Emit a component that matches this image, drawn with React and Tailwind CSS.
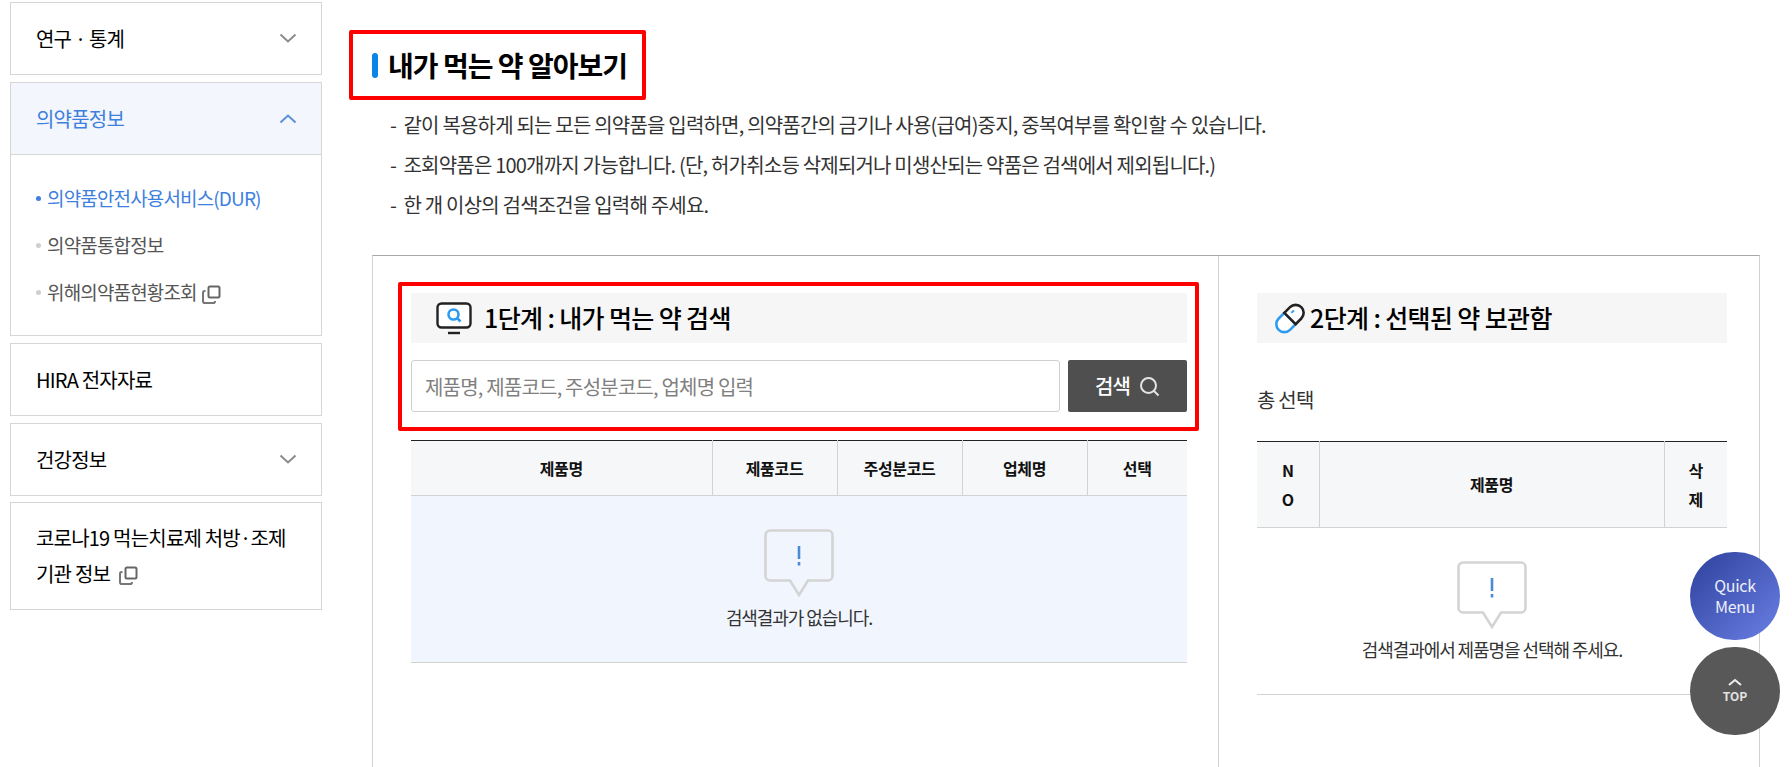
import React from 'react';

const FONT = '"Noto Sans CJK KR", "Noto Sans", sans-serif';

function Chevron({ up, className }) {
  return (
    <svg width="18" height="11" viewBox="0 0 18 11" fill="none" className={className}>
      <path d={up ? 'M1.5 9.5 9 2.5l7.5 7' : 'M1.5 1.5l7.5 7 7.5-7'} stroke="currentColor" strokeWidth="2" />
    </svg>
  );
}

function CopyIcon({ className }) {
  return (
    <svg width="19" height="19" viewBox="0 0 19 19" fill="none" className={className}>
      <rect x="6.5" y="1.5" width="11" height="11" rx="1.5" stroke="#666" strokeWidth="2" />
      <path d="M3.5 6H2.8C1.8 6 1 6.8 1 7.8v8.4c0 1 .8 1.8 1.8 1.8h8.4c1 0 1.8-.8 1.8-1.8V16" stroke="#777" strokeWidth="2" />
    </svg>
  );
}

function MenuHead({ children, chevron }) {
  return (
    <div className="flex items-center justify-between h-[73px] pl-[25px] pr-[24px] border border-[#d6d6d6] text-[20px] text-black tracking-[-0.04em]">
      <span>{children}</span>
      {chevron && <Chevron className="text-[#8a8a8a]" />}
    </div>
  );
}

function SubItem({ children, active }) {
  return (
    <li className={`flex items-center h-[47px] text-[19px] tracking-[-0.045em] ${active ? 'text-[#3d80de]' : 'text-[#555]'}`}>
      <span className={`w-[5px] h-[5px] rounded-full mr-[6px] ${active ? 'bg-[#3d80de]' : 'bg-[#cfcfcf]'}`} />
      {children}
    </li>
  );
}

function Sidebar() {
  return (
    <aside className="w-[312px] shrink-0 ml-[10px] mt-[2px] flex flex-col gap-[7px]">
      <MenuHead chevron>연구 · 통계</MenuHead>
      <div className="border border-[#d6d6d6]">
        <div className="flex items-center justify-between h-[72px] pl-[25px] pr-[24px] bg-[#f3f6fc] border-b border-[#d6d6d6] text-[20px] text-[#3d80de] tracking-[-0.04em]">
          <span>의약품정보</span>
          <Chevron up className="text-[#5a8fdc]" />
        </div>
        <ul className="pl-[25px] pt-[20px] pb-[19px]">
          <SubItem active>의약품안전사용서비스(DUR)</SubItem>
          <SubItem>의약품통합정보</SubItem>
          <SubItem>
            위해의약품현황조회
            <CopyIcon className="ml-[5px] mt-[3px]" />
          </SubItem>
        </ul>
      </div>
      <MenuHead>HIRA 전자자료</MenuHead>
      <MenuHead chevron>건강정보</MenuHead>
      <div className="-mt-[1px] border border-[#d6d6d6] pl-[25px] pr-[10px] pt-[17px] pb-[17px] text-[20px] leading-[36px] text-black tracking-[-0.04em]">
        <div>코로나19 먹는치료제 처방·조제</div>
        <div className="flex items-center">
          기관 정보
          <CopyIcon className="ml-[9px] mt-[3px]" />
        </div>
      </div>
    </aside>
  );
}

function SearchMonitor() {
  return (
    <svg width="36" height="33" viewBox="0 0 36 33" fill="none">
      <rect x="1.5" y="1.5" width="33" height="24" rx="4" fill="#fff" stroke="#222" strokeWidth="2.4" />
      <path d="M12 31h12" stroke="#222" strokeWidth="2.4" />
      <circle cx="17.5" cy="12.5" r="5" stroke="#2f9bf0" strokeWidth="2.6" />
      <path d="M21.5 16.5l3 3" stroke="#2f9bf0" strokeWidth="2.6" />
    </svg>
  );
}

function PillIcon() {
  return (
    <svg width="32" height="33" viewBox="0 0 32 33" fill="none">
      <g transform="rotate(-45 16 16.5)">
        <path d="M16 8.5H8a8 8 0 0 0 0 16h8z" fill="#fff" stroke="#2f9bf0" strokeWidth="2.6" />
        <path d="M16 8.5h8a8 8 0 0 1 0 16h-8z" fill="#fff" stroke="#222" strokeWidth="2.6" />
        <path d="M21 13.5h3.5" stroke="#2f9bf0" strokeWidth="2" />
      </g>
    </svg>
  );
}

function Bubble() {
  return (
    <svg width="70" height="68" viewBox="0 0 70 68" fill="none">
      <path d="M6 1.5h58a4.5 4.5 0 0 1 4.5 4.5v41a4.5 4.5 0 0 1-4.5 4.5H44L35 66 26 51.5H6A4.5 4.5 0 0 1 1.5 47V6A4.5 4.5 0 0 1 6 1.5z" stroke="#d4d4d4" strokeWidth="2.6" />
      <path d="M35 17v13" stroke="#4a8bd6" strokeWidth="2.6" />
      <path d="M35 33v3.5" stroke="#4a8bd6" strokeWidth="2.6" />
    </svg>
  );
}

function Th({ children, last }) {
  return (
    <th className={`font-bold text-[16px] text-[#111] leading-[29px] px-[20px] break-all tracking-[-0.02em] ${last ? '' : 'border-r border-[#d2d2d2]'}`}>
      {children}
    </th>
  );
}

function Notes() {
  return (
    <ul className="ml-[41px] mt-[5px] text-[20px] leading-[40px] text-[#333] tracking-[-0.04em]">
      <li>- &nbsp;같이 복용하게 되는 모든 의약품을 입력하면, 의약품간의 금기나 사용(급여)중지, 중복여부를 확인할 수 있습니다.</li>
      <li>- &nbsp;조회약품은 100개까지 가능합니다. (단, 허가취소등 삭제되거나 미생산되는 약품은 검색에서 제외됩니다.)</li>
      <li>- &nbsp;한 개 이상의 검색조건을 입력해 주세요.</li>
    </ul>
  );
}

function SearchStep() {
  return (
    <div className="w-[846px] shrink-0 border-r border-[#d2d2d2] pt-[26px]">
      <div className="ml-[25px] w-[801px] border-4 border-[#ff0000] rounded-[2px] pl-[9px] pr-[8px] pt-[7px] pb-[15px]">
        <div className="flex items-center h-[50px] pl-[25px] bg-[#f6f6f6] text-[25px] font-medium text-black tracking-[-0.025em]">
          <SearchMonitor />
          <span className="ml-[12px]">1단계 : 내가 먹는 약 검색</span>
        </div>
        <div className="flex gap-[8px] mt-[17px]">
          <input
            readOnly
            placeholder="제품명, 제품코드, 주성분코드, 업체명 입력"
            className="w-[649px] h-[52px] px-[13px] border border-[#d0d0d0] rounded-[3px] text-[20px] tracking-[-0.04em] placeholder:text-[#808080]"
          />
          <button className="flex-1 flex items-center justify-center gap-[9px] h-[52px] bg-[#4f4f4f] rounded-[2px] text-[20px] font-medium text-white tracking-[-0.04em]">
            검색
            <svg width="21" height="21" viewBox="0 0 21 21" fill="none">
              <circle cx="9.5" cy="9.5" r="7.5" stroke="#e4e4e4" strokeWidth="2" />
              <path d="M15 15l4.5 4.5" stroke="#e4e4e4" strokeWidth="2" />
            </svg>
          </button>
        </div>
      </div>
      <table className="ml-[38px] mt-[9px] w-[776px] table-fixed border-collapse">
        <colgroup>
          <col className="w-[301px]" />
          <col className="w-[125px]" />
          <col className="w-[125px]" />
          <col className="w-[125px]" />
          <col className="w-[100px]" />
        </colgroup>
        <thead>
          <tr className="h-[55px] bg-[#f6f7f9] border-t border-b border-t-[#222] border-b-[#d2d2d2]">
            <Th>제품명</Th>
            <Th>제품코드</Th>
            <Th>주성분코드</Th>
            <Th>업체명</Th>
            <Th last>선택</Th>
          </tr>
        </thead>
        <tbody>
          <tr className="bg-[#f1f5fd] border-b border-[#d2d2d2]">
            <td colSpan={5} className="h-[167px] text-center text-[18px] text-[#333] tracking-[-0.06em]">
              <div className="flex flex-col items-center gap-[7px] pt-[1px]">
                <Bubble />
                <span className="leading-[26px]">검색결과가 없습니다.</span>
              </div>
            </td>
          </tr>
        </tbody>
      </table>
    </div>
  );
}

function StorageStep() {
  return (
    <div className="flex-1 pt-[37px] pl-[38px] pr-[32px]">
      <div className="flex items-center h-[50px] pl-[17px] bg-[#f6f6f6] text-[25px] font-medium text-black tracking-[-0.025em]">
        <PillIcon />
        <span className="ml-[4px]">2단계 : 선택된 약 보관함</span>
      </div>
      <p className="mt-[41px] text-[20px] leading-[32px] text-[#333] tracking-[-0.04em]">총 선택</p>
      <table className="mt-[25px] w-full table-fixed border-collapse">
        <colgroup>
          <col className="w-[62px]" />
          <col />
          <col className="w-[63px]" />
        </colgroup>
        <thead>
          <tr className="h-[86px] bg-[#f6f7f9] border-t border-b border-t-[#222] border-b-[#d2d2d2]">
            <Th>NO</Th>
            <Th>제품명</Th>
            <Th last>삭제</Th>
          </tr>
        </thead>
        <tbody>
          <tr className="border-b border-[#d2d2d2]">
            <td colSpan={3} className="h-[167px] text-center text-[18px] text-[#333] tracking-[-0.06em]">
              <div className="flex flex-col items-center gap-[7px] pt-[1px]">
                <Bubble />
                <span className="leading-[26px]">검색결과에서 제품명을 선택해 주세요.</span>
              </div>
            </td>
          </tr>
        </tbody>
      </table>
    </div>
  );
}

export default function App() {
  return (
    <div className="relative flex h-screen overflow-hidden bg-white" style={{ fontFamily: FONT }}>
      <Sidebar />
      <main className="ml-[27px] w-[1411px] shrink-0">
        <div className="mt-[30px] inline-flex items-center h-[70px] w-[297px] border-4 border-[#ff0000] rounded-[2px] pl-[19px]">
          <span className="w-[6px] h-[25px] rounded-full bg-[#0a84e6] mr-[10px]" />
          <h2 className="text-[28px] font-bold text-black tracking-[-0.035em] whitespace-nowrap">내가 먹는 약 알아보기</h2>
        </div>
        <Notes />
        <section className="ml-[23px] mt-[30px] w-[1388px] h-[600px] flex border-l border-r border-t border-l-[#d2d2d2] border-r-[#d2d2d2] border-t-[#a8a8a8]">
          <SearchStep />
          <StorageStep />
        </section>
      </main>
      <div className="absolute left-[1690px] top-[552px] flex flex-col gap-[7px]">
        <div className="w-[90px] h-[88px] rounded-full bg-gradient-to-br from-[#2f409c] to-[#6a80e4] flex items-center justify-center text-center text-[16px] leading-[21px] text-[#eef0fb] tracking-[-0.02em]">
          Quick<br />Menu
        </div>
        <div className="w-[90px] h-[88px] rounded-full bg-[#585858] flex flex-col items-center justify-center text-[#e2e2e2]">
          <svg width="14" height="8" viewBox="0 0 14 8" fill="none">
            <path d="M1 7l6-5 6 5" stroke="#eee" strokeWidth="2" />
          </svg>
          <span className="text-[12px] font-bold leading-[16px] mt-[2px]">TOP</span>
        </div>
      </div>
    </div>
  );
}
